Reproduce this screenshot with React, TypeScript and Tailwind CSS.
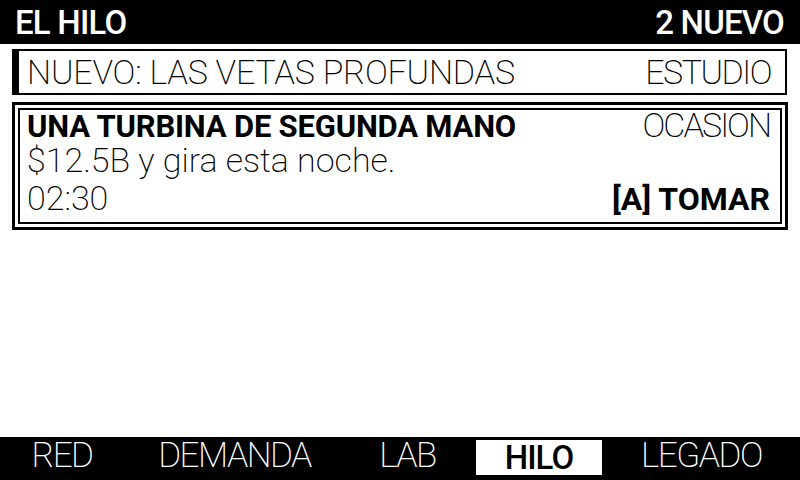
const tabs = [
  { label: "RED", active: false },
  { label: "DEMANDA", active: false },
  { label: "LAB", active: false },
  { label: "HILO", active: true },
  { label: "LEGADO", active: false },
];

export default function App() {
  return (
    <div className="w-[800px] h-[480px] bg-white text-black flex flex-col overflow-hidden font-['Roboto',sans-serif]">
      {/* header */}
      <div className="h-[44px] bg-black text-white flex items-center justify-between pl-[15px] pr-[16px] text-[33px] leading-none font-medium tracking-[-0.8px]">
        <span>EL HILO</span>
        <span>2 NUEVO</span>
      </div>

      {/* banner */}
      <div className="mt-[5px] mx-[12px] mr-[13px] h-[46px] border-2 border-l-[7px] border-black flex items-center justify-between pl-[8px] pr-[14px] text-[34px] leading-none font-extralight">
        <span className="tracking-[-0.2px]">NUEVO: LAS VETAS PROFUNDAS</span>
        <span className="tracking-[-1.5px]">ESTUDIO</span>
      </div>

      {/* card */}
      <div className="mt-[7px] mx-[12px] border-[3px] border-black p-[3px]">
        <div className="border-2 border-black pl-[7px] pr-[10px] pb-[6px]">
          <div className="flex justify-between items-baseline h-[35px] leading-[35px] mt-[-2px]">
            <span className="text-[31px] leading-[35px] font-bold tracking-[-0.2px]">UNA TURBINA DE SEGUNDA MANO</span>
            <span className="text-[34px] leading-[35px] font-extralight tracking-[-2px]">OCASION</span>
          </div>
          <div className="h-[35px] text-[34px] leading-[35px] font-extralight">$12.5B y gira esta noche.</div>
          <div className="flex justify-between items-baseline h-[35px] leading-[35px] mt-[3px]">
            <span className="text-[34px] leading-[35px] font-extralight">02:30</span>
            <span className="text-[32px] leading-[35px] font-bold">[A] TOMAR</span>
          </div>
        </div>
      </div>

      {/* bottom nav */}
      <div className="mt-auto h-[43px] bg-black grid grid-cols-[124px_221px_125px_138px_187px] items-center justify-items-center">
        {tabs.map((t) =>
          t.active ? (
            <div key={t.label} className="w-[126px] h-[35px] mt-[-2px] bg-white text-black flex items-center justify-center text-[33px] leading-none font-medium tracking-[-1px]">
              {t.label}
            </div>
          ) : (
            <div key={t.label} className="text-white text-[35px] leading-none font-extralight tracking-[-1.5px] mt-[-6px]">
              {t.label}
            </div>
          )
        )}
      </div>
    </div>
  );
}
